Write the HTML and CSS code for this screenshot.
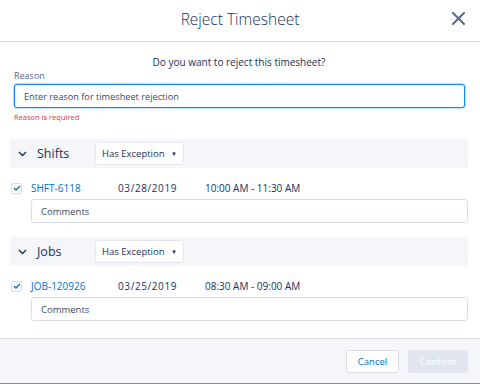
FILE: index.html
```html
<!DOCTYPE html>
<html lang="en">
<head>
  <meta charset="UTF-8" />
  <meta name="viewport" content="width=device-width, initial-scale=1.0" />
  <title>Reject Timesheet</title>
  <link rel="stylesheet" href="styles.css">
</head>
<body>

<div class="modal">

  <!-- Modal Header -->
  <header class="modal-header">
    <h2>Reject Timesheet</h2>
    <button class="close-btn" title="Close">
      <svg width="13" height="13" viewBox="0 0 13 13"><path d="M1 1 L12 12 M12 1 L1 12" stroke="#54698d" stroke-width="2" stroke-linecap="round"/></svg>
    </button>
  </header>

  <!-- Modal Body -->
  <div class="modal-body">
    <p class="question">Do you want to reject this timesheet?</p>

    <div class="reason-field">
      <label for="reason">Reason</label>
      <input type="text" id="reason" class="reason-input" placeholder="Enter reason for timesheet rejection" />
      <div class="error-text">Reason is required</div>
    </div>

    <!-- Shifts -->
    <div class="section">
      <div class="section-header">
        <svg class="chevron" width="9" height="6" viewBox="0 0 9 6"><path d="M1 1 L4.5 4.5 L8 1" fill="none" stroke="#16325c" stroke-width="1.4"/></svg>
        <span class="section-title">Shifts</span>
        <div class="select-box">Has Exception <span class="caret">&#9660;</span></div>
      </div>
      <div class="item-row">
        <span class="checkbox"><svg width="8" height="6" viewBox="0 0 8 6"><path d="M1 3 L3 5 L7 1" fill="none" stroke="#0070d2" stroke-width="1.4"/></svg></span>
        <a class="item-link">SHFT-6118</a>
        <span class="item-date">03/28/2019</span>
        <span class="item-time">10:00 AM - 11:30 AM</span>
      </div>
      <input type="text" class="comments-input" placeholder="Comments" />
    </div>

    <!-- Jobs -->
    <div class="section">
      <div class="section-header">
        <svg class="chevron" width="9" height="6" viewBox="0 0 9 6"><path d="M1 1 L4.5 4.5 L8 1" fill="none" stroke="#16325c" stroke-width="1.4"/></svg>
        <span class="section-title">Jobs</span>
        <div class="select-box">Has Exception <span class="caret">&#9660;</span></div>
      </div>
      <div class="item-row">
        <span class="checkbox"><svg width="8" height="6" viewBox="0 0 8 6"><path d="M1 3 L3 5 L7 1" fill="none" stroke="#0070d2" stroke-width="1.4"/></svg></span>
        <a class="item-link">JOB-120926</a>
        <span class="item-date">03/25/2019</span>
        <span class="item-time">08:30 AM - 09:00 AM</span>
      </div>
      <input type="text" class="comments-input" placeholder="Comments" />
    </div>
  </div>

  <!-- Modal Footer -->
  <footer class="modal-footer">
    <button class="btn btn-neutral">Cancel</button>
    <button class="btn btn-disabled" disabled>Confirm</button>
  </footer>

</div>

</body>
</html>
```

FILE: styles.css
```css
/* =========================
   General Page Styling
   ========================= */
body {
  font-family: "Open Sans", Arial, sans-serif;
  background-color: #ffffff;
  color: #16325c;
  margin: 0;
  padding: 0;
}

.modal {
  width: 480px;
  height: 384px;
  display: flex;
  flex-direction: column;
  border-bottom: 1px solid #8e8e8e;
  box-sizing: border-box;
}

/* =========================
   Header Styling
   ========================= */
.modal-header {
  height: 41px;
  border-bottom: 1px solid #d8dde6;
  display: flex;
  align-items: center;
  justify-content: center;
  position: relative;
  flex-shrink: 0;
}

.modal-header h2 {
  margin: 0 0 4px 0;
  font-size: 15.5px;
  font-weight: 300;
  color: #16325c;
}

.close-btn {
  position: absolute;
  right: 15px;
  top: 12px;
  background: none;
  border: none;
  padding: 0;
  width: 13px;
  height: 13px;
  cursor: pointer;
}

.close-btn svg {
  display: block;
}

/* =========================
   Body Styling
   ========================= */
.modal-body {
  flex: 1;
  padding: 0 12px 0 10px;
}

.question {
  margin: 13px 0 0 0;
  text-align: center;
  font-size: 10px;
  line-height: 14px;
}

.reason-field {
  padding: 0 3px 0 4px;
}

.reason-field label {
  display: block;
  font-size: 9px;
  line-height: 12px;
  color: #54698d;
  margin-top: 1px;
}

.reason-input {
  display: block;
  width: 100%;
  height: 24px;
  margin-top: 2px;
  padding: 0 9px;
  font-family: inherit;
  font-size: 9.2px;
  color: #16325c;
  border: 1px solid #1589ee;
  border-radius: 3px;
  box-shadow: 0 0 2px #1589ee;
  box-sizing: border-box;
  outline: none;
}

.reason-input::placeholder {
  color: #3e4a5c;
}

.error-text {
  font-size: 7.5px;
  line-height: 12px;
  margin-top: 3px;
  color: #e23a35;
}

/* =========================
   Sections
   ========================= */
.section {
  margin-top: 16px;
}

.section + .section {
  margin-top: 14px;
}

.section-header {
  height: 29px;
  background-color: #f4f6f9;
  display: flex;
  align-items: center;
  padding-left: 8px;
}

.chevron {
  display: block;
}

.section-title {
  font-size: 12.5px;
  margin-left: 10px;
  width: 58px;
}

.select-box {
  height: 23px;
  width: 89px;
  box-sizing: border-box;
  background: #fff;
  border: 1px solid #e4e8ee;
  border-radius: 3px;
  display: flex;
  align-items: center;
  justify-content: space-between;
  padding: 0 6px 0 6px;
  font-size: 9.5px;
  color: #16325c;
}

.caret {
  font-size: 6px;
  color: #16325c;
}

.item-row {
  display: flex;
  align-items: center;
  height: 14px;
  margin-top: 13px;
  padding-left: 1px;
  font-size: 10px;
}

.checkbox {
  width: 11px;
  height: 11px;
  border: 1px solid #d8dde6;
  border-radius: 2px;
  display: flex;
  align-items: center;
  justify-content: center;
  box-sizing: border-box;
}

.item-link {
  color: #0070d2;
  margin-left: 9px;
  width: 87px;
}

.item-date {
  width: 87px;
  letter-spacing: 0.6px;
}

.comments-input {
  display: block;
  width: 437px;
  height: 24px;
  margin: 4px 0 0 21px;
  padding: 0 9px;
  font-family: inherit;
  font-size: 9.5px;
  border: 1px solid #d8dde6;
  border-radius: 3px;
  box-sizing: border-box;
}

.comments-input::placeholder {
  color: #3e4a5c;
}

/* =========================
   Footer Styling
   ========================= */
.modal-footer {
  height: 44px;
  border-top: 1px solid #d8dde6;
  background-color: #f4f6f9;
  display: flex;
  align-items: center;
  justify-content: flex-end;
  gap: 9px;
  padding-right: 12px;
  flex-shrink: 0;
}

.btn {
  height: 23px;
  font-family: inherit;
  font-size: 9.5px;
  border-radius: 3px;
  padding: 0;
}

.btn-neutral {
  width: 53px;
  background: #fff;
  border: 1px solid #d8dde6;
  color: #0070d2;
  cursor: pointer;
}

.btn-disabled {
  width: 60px;
  background: #e0e5ee;
  border: 1px solid #e0e5ee;
  color: #fff;
  cursor: not-allowed;
}
```
